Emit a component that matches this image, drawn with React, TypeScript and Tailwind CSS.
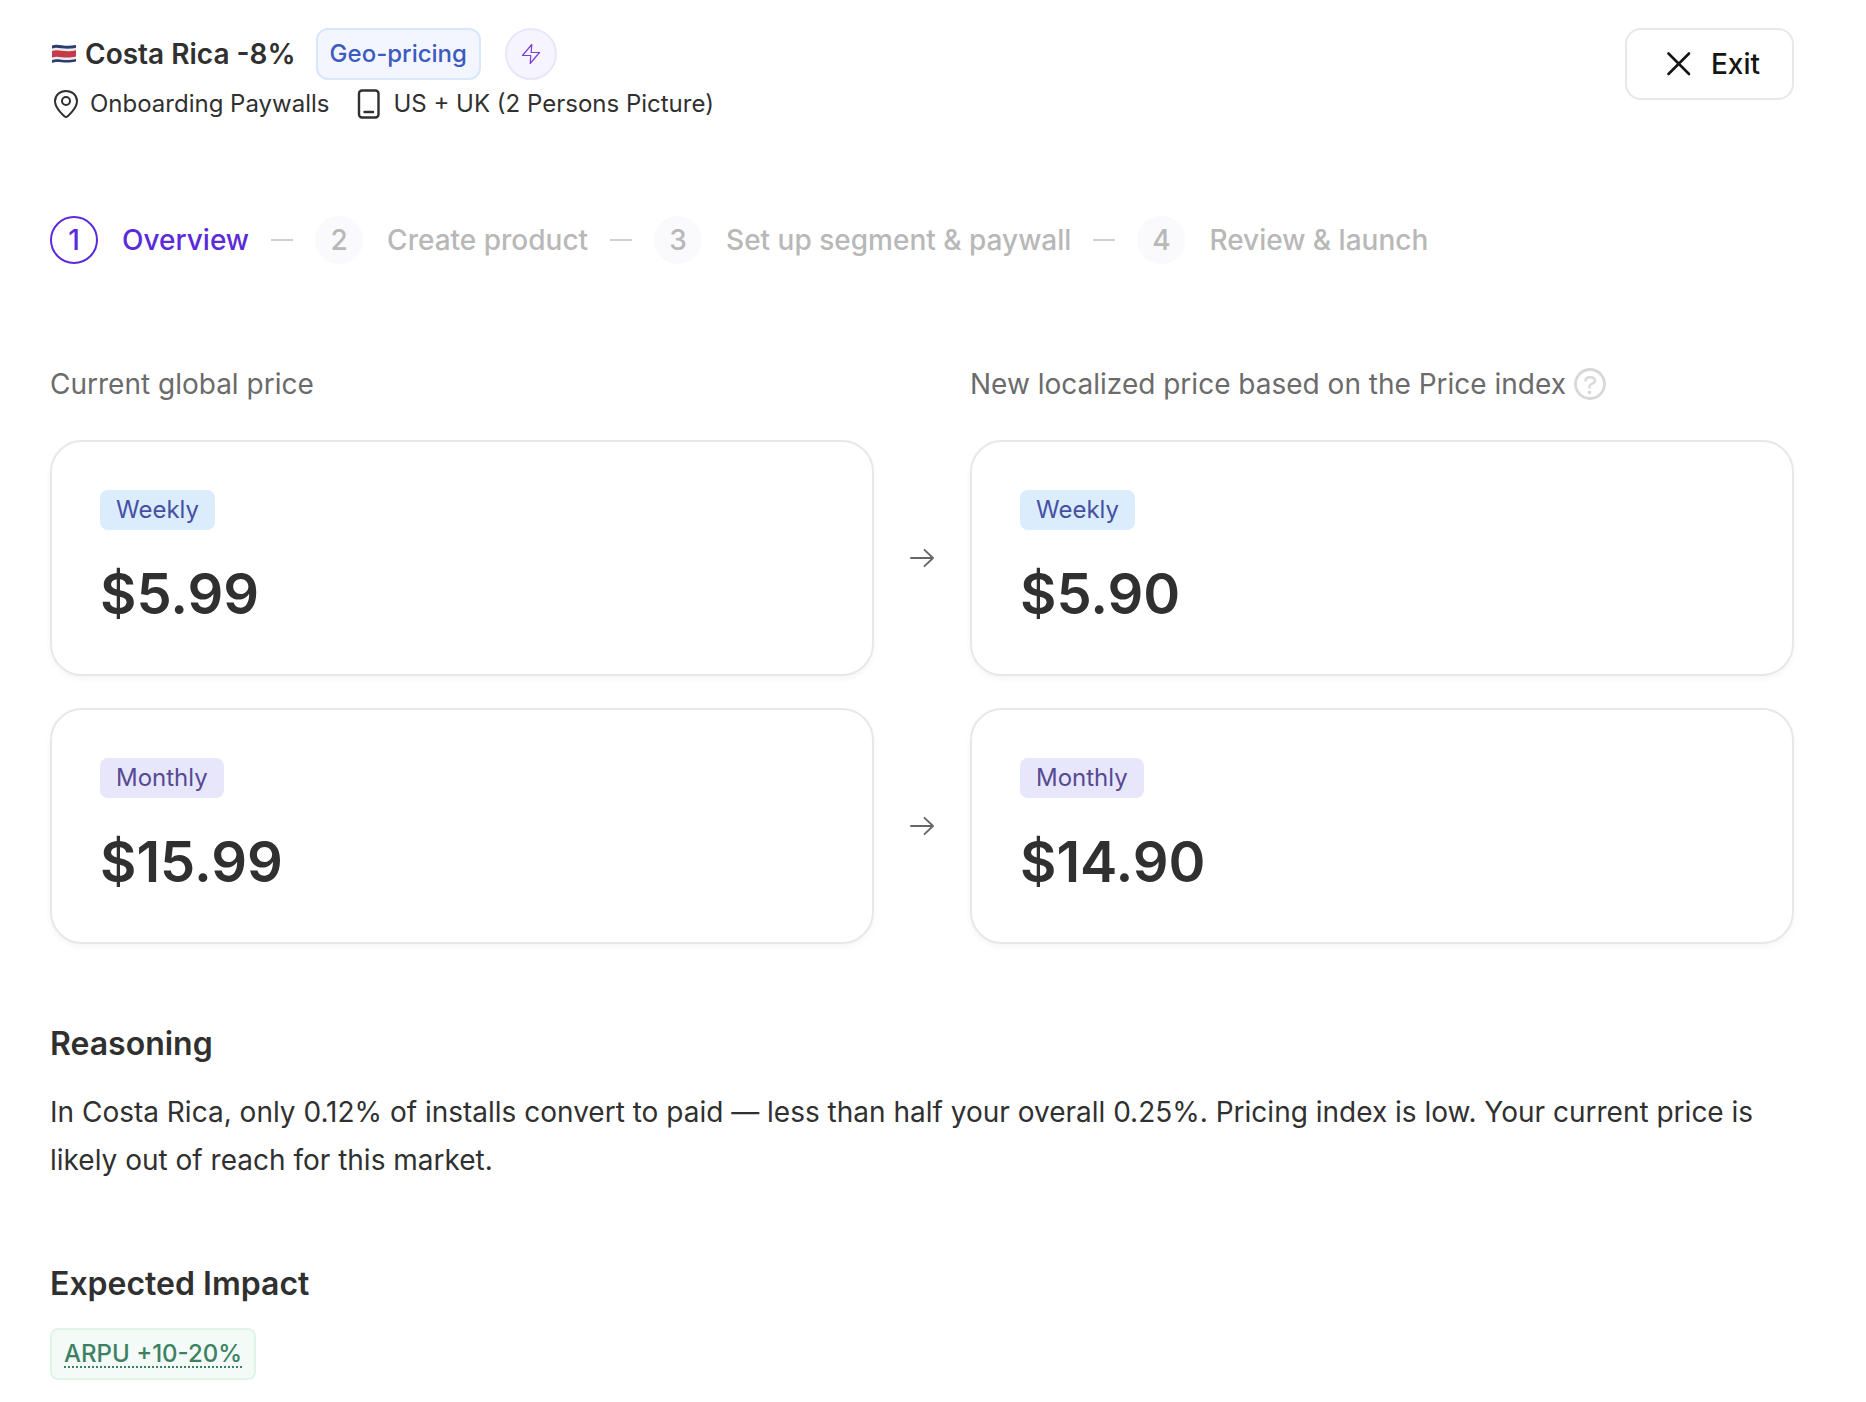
import type { ReactNode } from "react";

type Price = {
  period: "Weekly" | "Monthly";
  current: string;
  localized: string;
};

const STEPS = ["Overview", "Create product", "Set up segment & paywall", "Review & launch"];

const PRICES: Price[] = [
  { period: "Weekly", current: "$5.99", localized: "$5.90" },
  { period: "Monthly", current: "$15.99", localized: "$14.90" },
];

function CostaRicaFlag() {
  return (
    <svg width="28" height="28" viewBox="0 0 28 28" aria-hidden="true">
      <path d="M2 5.500C8 3 14 7.500 26 5V21.500C14 24.500 8 20 2 23Z" fill="#e9ebf1" />
      <path d="M2 5.500C8 3 14 7.500 26 5V7.800C14 10.500 8 6 2 8.500Z" fill="#2c3c6e" />
      <path d="M2 11C8 8.500 14 13 26 10.200V16.500C14 19.500 8 15 2 17.500Z" fill="#c73a45" />
      <path d="M2 20.200C8 17.500 14 22 26 19V21.500C14 24.500 8 20 2 23Z" fill="#2c3c6e" />
    </svg>
  );
}

function PinIcon() {
  return (
    <svg width="32" height="32" viewBox="0 0 32 32" fill="none" stroke="currentColor" strokeWidth="2" strokeLinejoin="round" aria-hidden="true">
      <path d="M16 29C15 29 5 20.500 5 13.200C5 7 10 3 16 3S27 7 27 13.200C27 20.500 17 29 16 29Z" />
      <circle cx="16" cy="13" r="4" />
    </svg>
  );
}

function PhoneIcon() {
  return (
    <svg width="32" height="32" viewBox="0 0 32 32" fill="none" stroke="currentColor" strokeWidth="2.400" strokeLinecap="round" aria-hidden="true">
      <rect x="6" y="2.500" width="19.500" height="27" rx="3" />
      <path d="M11.500 24H20" />
    </svg>
  );
}

function BoltIcon() {
  return (
    <svg width="24" height="24" viewBox="0 0 24 24" fill="none" stroke="currentColor" strokeWidth="1.200" strokeLinejoin="round" aria-hidden="true">
      <path d="M12.800 2.500L3.500 13.500H11.800L11.200 21.500L20.500 10.500H12.200Z" />
    </svg>
  );
}

function CloseIcon() {
  return (
    <svg width="32" height="32" viewBox="0 0 32 32" fill="none" stroke="currentColor" strokeWidth="2.600" strokeLinecap="round" aria-hidden="true">
      <path d="M5.500 5.500L26 26M26 5.500L5.500 26" />
    </svg>
  );
}

function ArrowIcon() {
  return (
    <svg width="32" height="32" viewBox="0 0 32 32" fill="none" stroke="currentColor" strokeWidth="1.800" strokeLinecap="round" strokeLinejoin="round" aria-hidden="true">
      <path d="M5 16H27M18.500 7.800L27 16L18.500 24.200" />
    </svg>
  );
}

function HelpIcon() {
  return (
    <svg width="32" height="32" viewBox="0 0 32 32" fill="none" stroke="currentColor" strokeWidth="2.800" aria-hidden="true">
      <circle cx="16" cy="16" r="14.500" />
      <path d="M11.500 13.500V12.500C11.500 10.300 13.200 9.200 16.200 9.200S21 10.500 21 12.800C21 16.500 15.500 15 15.500 18.500V20.500" strokeWidth="2.400" />
      <circle cx="15.500" cy="24.500" r="1.800" fill="currentColor" stroke="none" />
    </svg>
  );
}

function Step({ number, label, active }: { number: number; label: string; active: boolean }) {
  return (
    <li className="flex items-center" aria-current={active ? "step" : undefined}>
      {number > 1 && <span className="mx-[22px] h-0.5 w-[22px] bg-[#cfcfcf]" />}
      <span
        className={
          active
            ? "flex size-12 items-center justify-center rounded-full border-2 border-[#5b2bd9] text-[#5b2bd9]"
            : "flex size-12 items-center justify-center rounded-full bg-[#fafafc] text-[#b8b8b8]"
        }
      >
        {number}
      </span>
      <span className={active ? "ml-6 text-[#5b2bd9]" : "ml-6 text-[#b8b8b8]"}>{label}</span>
    </li>
  );
}

function PriceCard({ period, price }: { period: Price["period"]; price: string }) {
  return (
    <div className="flex flex-col items-start rounded-[32px] border-2 border-[#e8e8e8] bg-white p-12 shadow-[0_3px_6px_rgba(0,0,0,0.04)]">
      <span
        className={
          period === "Weekly"
            ? "rounded-lg bg-[#dbecfd] px-4 text-2xl leading-10 text-[#4650a3]"
            : "rounded-lg bg-[#e8e6fb] px-4 text-2xl leading-10 text-[#554a93]"
        }
      >
        {period}
      </span>
      <span className="mt-8 text-[56px] leading-[64px] font-semibold">{price}</span>
    </div>
  );
}

function Section({ title, children }: { title: string; children: ReactNode }) {
  return (
    <section className="mt-20">
      <h2 className="mb-6 text-[32px] leading-10 font-semibold">{title}</h2>
      {children}
    </section>
  );
}

export default function App() {
  return (
    <main className="min-h-screen bg-white pt-7 pr-[72px] pb-5 pl-[50px] font-['Inter','Liberation_Sans',sans-serif] text-[28px] text-[#303030]">
      <header className="flex items-start justify-between">
        <div>
          <div className="flex items-center gap-5">
            <h1 className="flex items-center gap-[7px] font-semibold">
              <CostaRicaFlag />
              Costa Rica -8%
            </h1>
            <div className="flex items-center gap-6">
              <span className="flex h-[52px] items-center rounded-xl border-2 border-[#d9e7fc] bg-[#f3f6fe] px-3 text-2xl font-medium text-[#3b5bbf]">
                Geo-pricing
              </span>
              <span className="flex size-[52px] items-center justify-center rounded-full border-2 border-[#ebe5fa] bg-[#f6f4fe] text-[#7a3fd6]">
                <BoltIcon />
              </span>
            </div>
          </div>
          <div className="mt-1 flex items-center gap-6 text-2xl leading-10">
            <span className="flex items-center gap-2">
              <PinIcon />
              Onboarding Paywalls
            </span>
            <span className="flex items-center gap-2">
              <PhoneIcon />
              US + UK (2 Persons Picture)
            </span>
          </div>
        </div>
        <button
          type="button"
          className="flex h-[72px] items-center gap-4 rounded-2xl border-2 border-[#e8e8e8] pr-8 pl-9 font-medium text-[#151515]"
        >
          <CloseIcon />
          Exit
        </button>
      </header>

      {/* Steps */}
      <ol className="mt-[92px] flex items-center font-medium">
        {STEPS.map((label, i) => (
          <Step key={label} number={i + 1} label={label} active={i === 0} />
        ))}
      </ol>

      {/* Prices */}
      <section className="mt-[100px] grid grid-cols-[1fr_96px_1fr] gap-y-8">
        <p className="mb-1 leading-10 text-[#6b6b6b]">Current global price</p>
        <p className="col-start-3 mb-1 flex items-center gap-2 leading-10 text-[#6b6b6b]">
          New localized price based on the Price index
          <button type="button" aria-label="About the Price index" className="text-[#d8d8d8]">
            <HelpIcon />
          </button>
        </p>
        {PRICES.map(({ period, current, localized }) => (
          <div key={period} className="contents">
            <PriceCard period={period} price={current} />
            <div className="flex items-center justify-center text-[#666]">
              <ArrowIcon />
            </div>
            <PriceCard period={period} price={localized} />
          </div>
        ))}
      </section>

      <Section title="Reasoning">
        <p className="leading-[48px]">
          In Costa Rica, only 0.12% of installs convert to paid — less than half your overall 0.25%. Pricing index is
          low. Your current price is likely out of reach for this market.
        </p>
      </Section>

      <Section title="Expected Impact">
        <span className="flex h-[52px] w-fit items-center rounded-lg border-2 border-[#e0f4ea] bg-[#f4faf7] px-3 text-2xl font-medium text-[#3c8262]">
          <span className="underline decoration-dotted decoration-2 underline-offset-4">ARPU +10-20%</span>
        </span>
      </Section>
    </main>
  );
}
